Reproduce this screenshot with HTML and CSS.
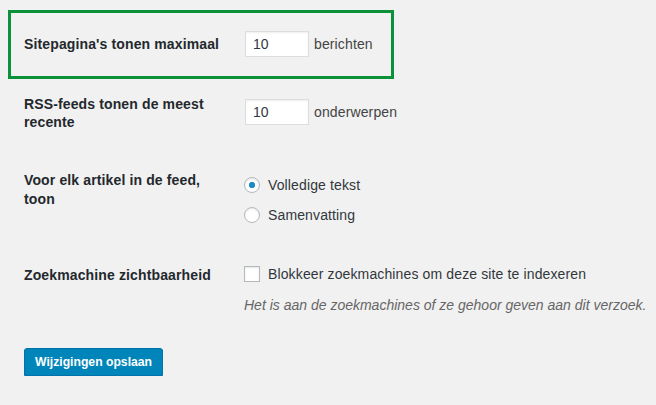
FILE: index.html
```html
<!DOCTYPE html>
<html lang="nl">
<head>
<meta charset="utf-8">
<title>Leesinstellingen</title>
<link rel="stylesheet" href="styles.css">
</head>
<body>
<form class="settings">
  <div class="highlight">
    <div class="row row-first">
      <label class="row-label" for="posts">Sitepagina's tonen maximaal</label>
      <div class="row-field inline">
        <input class="num" id="posts" type="text" value="10">
        <span class="unit">berichten</span>
      </div>
    </div>
  </div>

  <div class="row row-rss">
    <label class="row-label" for="rss">RSS-feeds tonen de meest recente</label>
    <div class="row-field inline field-rss">
      <input class="num" id="rss" type="text" value="10">
      <span class="unit">onderwerpen</span>
    </div>
  </div>

  <div class="row row-feed">
    <div class="row-label">Voor elk artikel in de feed, toon</div>
    <div class="row-field options">
      <label class="option"><input class="radio" type="radio" name="feed" checked><span>Volledige tekst</span></label>
      <label class="option"><input class="radio" type="radio" name="feed"><span>Samenvatting</span></label>
    </div>
  </div>

  <div class="row row-search">
    <div class="row-label">Zoekmachine zichtbaarheid</div>
    <div class="row-field">
      <label class="option"><input class="check" type="checkbox"><span>Blokkeer zoekmachines om deze site te indexeren</span></label>
      <p class="description">Het is aan de zoekmachines of ze gehoor geven aan dit verzoek.</p>
    </div>
  </div>

  <div class="submit">
    <button class="button-primary" type="button">Wijzigingen opslaan</button>
  </div>
</form>
</body>
</html>
```

FILE: styles.css
```css
* { box-sizing: border-box; }

html, body {
  margin: 0;
  background: #f1f1f1;
}

body {
  font-family: "Liberation Sans", Arial, sans-serif;
  font-size: 14px;
  line-height: 18.2px;
  letter-spacing: 0.13px;
  color: #444;
}

.settings {
  padding: 10px 0 0 24px;
  margin: 0;
}

.highlight {
  width: 386px;
  margin-left: -16px;
  border: 3px solid #0b9139;
  padding: 18px 0 19px 13px;
}

.row {
  display: grid;
  grid-template-columns: 221px 1fr;
  align-items: start;
}

.row-label {
  font-weight: 700;
  color: #23282d;
  padding-right: 21px;
}

.row-first {
  align-items: center;
}

.row-rss {
  padding: 16px 0 20px;
}

.field-rss {
  margin-top: 4px;
}

.row-feed {
  padding: 20px 0 22.5px;
}

.row-search {
  padding: 20px 0 0;
}

.inline {
  display: flex;
  align-items: center;
}

.num {
  width: 64px;
  height: 26px;
  margin: 0;
  padding: 0 7px;
  border: 1px solid #dddddd;
  background: #fff;
  box-shadow: inset 0 1px 2px rgba(0, 0, 0, 0.07);
  font-family: inherit;
  font-size: 14px;
  color: #32373c;
  outline: none;
}

.unit {
  margin-left: 5px;
  color: #444;
}

.options {
  display: flex;
  flex-direction: column;
  gap: 14px;
  padding-top: 6px;
}

.option {
  display: flex;
  align-items: center;
  gap: 8px;
  height: 16px;
  margin-left: -1px;
  color: #32373c;
}

.radio,
.check {
  appearance: none;
  -webkit-appearance: none;
  width: 16px;
  height: 16px;
  margin: 0;
  flex: none;
  border: 1px solid #b4b9be;
  background: #fff;
  box-shadow: inset 0 1px 2px rgba(0, 0, 0, 0.1);
}

.radio {
  border-radius: 50%;
}

.radio:checked {
  background: radial-gradient(circle, #1e8cbe 0 2.8px, #fff 3.4px);
}

.description {
  margin: 14px 0 0 -1px;
  font-style: italic;
  letter-spacing: 0;
  color: #666;
}

.submit {
  margin-top: 34px;
}

.button-primary {
  height: 28px;
  padding: 0 10px;
  border: 1px solid #0073aa;
  border-radius: 3px;
  background: #0085ba;
  box-shadow: 0 1px 0 #006799;
  color: #fff;
  font-family: inherit;
  font-size: 12.2px;
  font-weight: 700;
  letter-spacing: 0;
  line-height: 26px;
  cursor: pointer;
}
```
